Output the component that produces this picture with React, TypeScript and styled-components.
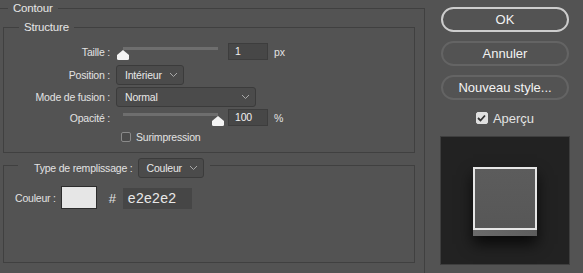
import styled, { createGlobalStyle } from 'styled-components';

const GlobalStyle = createGlobalStyle`
  html, body {
    margin: 0;
    padding: 0;
    background: #535353;
    overflow: hidden;
  }
  * { box-sizing: border-box; }
`;

const Page = styled.div`
  display: flex;
  width: 583px;
  height: 273px;
  overflow: hidden;
  background: #535353;
  color: #e2e2e2;
  font-family: 'Liberation Sans', Arial, sans-serif;
  font-size: 10.5px;
  letter-spacing: -0.2px;
`;

const Group = styled.fieldset`
  margin: 0;
  padding: 0;
  width: 425px;
  min-width: 0;
  height: 300px;
  border: 1px solid #404040;
  border-left: none;
  border-bottom: none;
`;

const GroupTitle = styled.legend`
  margin-left: 8px;
  padding: 0 5px;
  height: 16px;
  line-height: 16px;
  font-size: 11.5px;
  color: #e6e6e6;
`;

const Box = styled.fieldset<{ $top: number }>`
  margin: ${(p) => p.$top}px 0 0 3px;
  padding: 0;
  width: 412px;
  min-width: 0;
  border: 1px solid #404040;
`;

const BoxTitle = styled.legend`
  margin-left: 15px;
  padding: 0 5px;
  height: 16px;
  line-height: 16px;
  font-size: 11.5px;
  color: #e6e6e6;
`;

const Form = styled.div`
  display: grid;
  grid-template-columns: 106px auto;
  column-gap: 6px;
  align-items: center;
  padding: 8px 0 9px;
`;

const Label = styled.div<{ $mt?: number }>`
  margin-top: ${(p) => p.$mt ?? 0}px;
  text-align: right;
  white-space: nowrap;
`;

const Controls = styled.div<{ $mt?: number }>`
  display: flex;
  align-items: center;
  margin-top: ${(p) => p.$mt ?? 0}px;
`;

const SliderWrap = styled.div`
  position: relative;
  width: 112px;
  height: 17px;
`;

const Track = styled.div`
  position: absolute;
  left: 7px;
  top: 4px;
  width: 95px;
  height: 3px;
  background: #6e6e6e;
`;

const Thumb = styled.svg`
  position: absolute;
  top: 7px;
`;

const NumInput = styled.div`
  width: 40px;
  height: 17px;
  padding: 0 0 0 6px;
  line-height: 15px;
  background: #474747;
  border: 1px solid #3d3d3d;
  color: #f0f0f0;
`;

const Unit = styled.span`
  margin-left: 6px;
`;

const Select = styled.div<{ $w: number }>`
  display: flex;
  align-items: center;
  justify-content: space-between;
  flex-shrink: 0;
  width: ${(p) => p.$w}px;
  height: 20px;
  padding: 0 5px 0 8px;
  background: #4b4b4b;
  border: 1px solid #3b3b3b;
  border-radius: 3px;
  color: #e8e8e8;
`;

const Check = styled.div<{ $ml?: number; $mt?: number }>`
  display: flex;
  align-items: center;
  gap: 5px;
  height: 12px;
  margin: ${(p) => p.$mt ?? 0}px 0 0 ${(p) => p.$ml ?? 0}px;
`;

const CheckBox = styled.div<{ $on?: boolean }>`
  display: flex;
  align-items: center;
  justify-content: center;
  width: ${(p) => (p.$on ? 12 : 10)}px;
  height: ${(p) => (p.$on ? 12 : 10)}px;
  border-radius: 2px;
  border: 1px solid ${(p) => (p.$on ? '#e0e0e0' : '#8a8a8a')};
  background: ${(p) => (p.$on ? '#e0e0e0' : '#4b4b4b')};
`;

const FillLegend = styled.legend`
  margin-left: 14px;
  padding: 0 6px 0 16px;
  height: 14px;
  display: flex;
  align-items: flex-start;
  gap: 5px;
`;

const FillLabel = styled.span`
  line-height: 20px;
  white-space: nowrap;
`;

const ColorRow = styled.div`
  display: flex;
  align-items: flex-start;
  padding: 14px 0 0 11px;
  height: 90px;
`;

const ColorLabel = styled.span`
  margin-top: 6px;
`;

const Swatch = styled.div`
  width: 36px;
  height: 23px;
  margin-left: 5px;
  background: #e6e6e6;
  border: 1px solid #2c2c2c;
`;

const Hash = styled.span`
  margin: 5px 0 0 12px;
  font-size: 13px;
`;

const HexInput = styled.div`
  width: 69px;
  height: 21px;
  margin: 2px 0 0 7px;
  padding-left: 5px;
  background: #464646;
  font-size: 14px;
  line-height: 21px;
  color: #e8e8e8;
  letter-spacing: 0.3px;
`;

const Side = styled.div`
  display: flex;
  flex-direction: column;
  align-items: center;
  width: 130px;
  margin-left: 15px;
  padding-top: 7px;
`;

const Button = styled.div<{ $primary?: boolean }>`
  width: 128px;
  height: 25px;
  margin-bottom: 9px;
  display: flex;
  align-items: center;
  justify-content: center;
  border-radius: 13px;
  border: ${(p) => (p.$primary ? '2px solid #cdcdcd' : '2px solid #646464')};
  color: #f2f2f2;
  font-size: 13px;
  letter-spacing: 0;
`;

const CheckText = styled.span`
  font-size: 13px;
  letter-spacing: 0;
`;

const Preview = styled.div`
  display: flex;
  align-items: center;
  justify-content: center;
  width: 130px;
  height: 129px;
  margin-top: 12px;
  background: #222222;
  border: 1px solid #3e3e3e;
`;

const Sample = styled.div`
  margin-top: 2px;
  width: 64px;
  height: 69px;
  display: flex;
  flex-direction: column;
  box-shadow: 0 8px 14px rgba(0, 0, 0, 0.75);
`;

const SampleFace = styled.div`
  height: 63px;
  border: 2px solid #e6e6e6;
  background: linear-gradient(#5c5c5c, #575757);
`;

const SampleEdge = styled.div`
  flex: 1;
  background: linear-gradient(90deg, #6b6b6b, #5d5d5d);
`;

const Chevron = () => (
  <svg width="9" height="6" viewBox="0 0 9 6">
    <path d="M1 1 L4.5 4.5 L8 1" stroke="#a8a8a8" strokeWidth="1" fill="none" />
  </svg>
);

const SliderThumb = ({ at }: { at: number }) => (
  <Thumb width="12" height="10" viewBox="0 0 12 10" style={{ left: at - 6 }}>
    <path d="M6 0 L12 5 V8.5 Q12 10 10.5 10 H1.5 Q0 10 0 8.5 V5 Z" fill="#f4f4f4" />
  </Thumb>
);

const Slider = ({ value }: { value: number }) => (
  <SliderWrap>
    <Track />
    <SliderThumb at={7 + (95 * value) / 100} />
  </SliderWrap>
);

export default function App() {
  return (
    <Page>
      <GlobalStyle />
      <Group>
        <GroupTitle>Contour</GroupTitle>
        <Box $top={3}>
          <BoxTitle>Structure</BoxTitle>
          <Form>
            <Label>Taille :</Label>
            <Controls>
              <Slider value={0} />
              <NumInput>1</NumInput>
              <Unit>px</Unit>
            </Controls>
            <Label $mt={5}>Position :</Label>
            <Controls $mt={5}>
              <Select $w={68}>
                Intérieur <Chevron />
              </Select>
            </Controls>
            <Label $mt={2}>Mode de fusion :</Label>
            <Controls $mt={2}>
              <Select $w={140}>
                Normal <Chevron />
              </Select>
            </Controls>
            <Label $mt={2}>Opacité :</Label>
            <Controls $mt={2}>
              <Slider value={100} />
              <NumInput>100</NumInput>
              <Unit>%</Unit>
            </Controls>
            <span />
            <Check $ml={5} $mt={5}>
              <CheckBox />
              Surimpression
            </Check>
          </Form>
        </Box>
        <Box $top={5}>
          <FillLegend>
            <FillLabel>Type de remplissage :</FillLabel>
            <Select $w={66}>
              Couleur <Chevron />
            </Select>
          </FillLegend>
          <ColorRow>
            <ColorLabel>Couleur :</ColorLabel>
            <Swatch />
            <Hash>#</Hash>
            <HexInput>e2e2e2</HexInput>
          </ColorRow>
        </Box>
      </Group>
      <Side>
        <Button $primary>OK</Button>
        <Button>Annuler</Button>
        <Button>Nouveau style...</Button>
        <Check $mt={3}>
          <CheckBox $on>
            <svg width="9" height="8" viewBox="0 0 9 8">
              <path d="M1 4 L3.5 6.5 L8 1.5" stroke="#333" strokeWidth="1.8" fill="none" />
            </svg>
          </CheckBox>
          <CheckText>Aperçu</CheckText>
        </Check>
        <Preview>
          <Sample>
            <SampleFace />
            <SampleEdge />
          </Sample>
        </Preview>
      </Side>
    </Page>
  );
}
